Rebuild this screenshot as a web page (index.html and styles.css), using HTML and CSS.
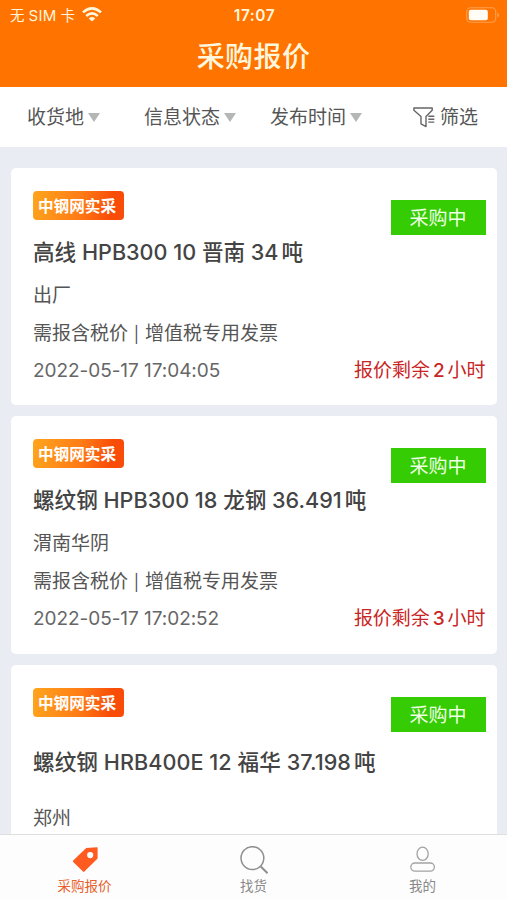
FILE: index.html
```html
<!DOCTYPE html>
<html lang="zh-CN">
<head>
<meta charset="utf-8">
<meta name="viewport" content="width=device-width">
<title>采购报价</title>
<link rel="stylesheet" href="styles.css">
</head>
<body>
<div class="app">
  <header class="header">
    <div class="status">
      <div class="carrier">
        <span class="carrier-text">无<span class="sim">SIM</span>卡</span>
        <svg class="wifi" viewBox="0 0 20 15"><g fill="none" stroke="#fff6dc" stroke-width="2.6"><path d="M1 5.4Q10-2.6 19 5.4"/><path d="M4.2 9Q10 3.8 15.8 9"/></g><path d="M10 14.6L6.7 11.4Q10 8.8 13.3 11.4Z" fill="#fff6dc"/></svg>
      </div>
      <span class="clock">17:07</span>
      <svg class="battery" viewBox="0 0 34 16"><rect x=".7" y=".7" width="29" height="14.6" rx="4" fill="none" stroke="#ffa04d" stroke-width="1.1"/><rect x="2.8" y="2.8" width="19" height="10.4" rx="2" fill="#fffdf5"/><path d="M31.3 5.4Q33.2 6.4 33.2 8T31.3 10.6Z" fill="#ffa04d"/></svg>
    </div>
    <h1 class="page-title">采购报价</h1>
  </header>
  <nav class="filters">
    <span class="filter f1">收货地<i class="caret"></i></span>
    <span class="filter f2">信息状态<i class="caret"></i></span>
    <span class="filter f3">发布时间<i class="caret"></i></span>
    <span class="filter f4"><svg class="funnel" viewBox="0 0 22 21" fill="none" stroke="#666" stroke-width="1.4" stroke-linejoin="round"><path d="M.9 1H19.2V3.2L13 9.5V19.6L8 16.8V9.5L.9 3.2Z"/><path d="M15.3 9.3H21.3M15.3 12.2H21.3M15.3 15.1H21.3"/></svg>筛选</span>
  </nav>
  <main class="list">
    <article class="card">
      <div class="top"><span class="brand">中钢网实采</span><span class="state">采购中</span></div>
      <h2 class="name">高线 HPB300 10 晋南 34<span class="unit">吨</span></h2>
      <p class="line place">出厂</p>
      <p class="line">需报含税价 <span class="bar">|</span> 增值税专用发票</p>
      <div class="foot"><time>2022-05-17 17:04:05</time><span class="left">报价剩余<b>2</b>小时</span></div>
    </article>
    <article class="card">
      <div class="top"><span class="brand">中钢网实采</span><span class="state">采购中</span></div>
      <h2 class="name">螺纹钢 HPB300 18 龙钢 36.491<span class="unit">吨</span></h2>
      <p class="line place">渭南华阴</p>
      <p class="line">需报含税价 <span class="bar">|</span> 增值税专用发票</p>
      <div class="foot"><time>2022-05-17 17:02:52</time><span class="left">报价剩余<b>3</b>小时</span></div>
    </article>
    <article class="card card-tall">
      <div class="top"><span class="brand">中钢网实采</span><span class="state">采购中</span></div>
      <h2 class="name">螺纹钢 HRB400E 12 福华 37.198<span class="unit">吨</span></h2>
      <p class="line place">郑州</p>
    </article>
  </main>
  <nav class="tabs">
    <a class="tab active"><svg class="icon" viewBox="0 0 28 28"><path fill="#ff5a1f" fill-rule="evenodd" d="M15.2 2L26 1.2Q26.6 1.2 26.6 2V12.5L13.4 25.6Q12.7 26.2 12 25.6L2.2 16Q1.5 15.2 2.2 14.4ZM19.2 6A3.1 3.1 0 1 0 19.2 12.2A3.1 3.1 0 1 0 19.2 6Z"/></svg>采购报价</a>
    <a class="tab"><svg class="icon" viewBox="0 0 28 28" fill="none" stroke="#8f8f8f" stroke-width="1.5"><circle cx="12.4" cy="12.1" r="11.4"/><path d="M20.5 20.3L27.5 27.2" stroke-width="2"/></svg>找货</a>
    <a class="tab"><svg class="icon" viewBox="0 0 28 28" fill="none" stroke="#a3a3a3" stroke-width="1.3"><ellipse cx="13.6" cy="7.8" rx="5.6" ry="6.6"/><rect x="1.8" y="17" width="23.6" height="8.2" rx="4.1"/></svg>我的</a>
  </nav>
</div>
</body>
</html>
```
FILE: styles.css
```css
* { box-sizing: border-box; margin: 0; padding: 0; }
body { font-family: Inter, "Noto Sans CJK SC", sans-serif; color: #555; background: #e9ecf3; }
.app { width: 507px; height: 900px; display: flex; flex-direction: column; overflow: hidden; }
.header { height: 87px; flex: none; background: #ff7300; color: #fff6dc; }
.status { height: 30px; padding: 0 8px 0 10px; display: grid; grid-template-columns: 1fr auto 1fr; align-items: center; }
.carrier { display: flex; align-items: center; gap: 7px; }
.carrier-text { font-size: 14.5px; line-height: 31px; height: 30px; white-space: nowrap; }
.sim { margin: 0 4px 0 4px; font-size: 15px; letter-spacing: .3px; }
.wifi { width: 20px; height: 15px; margin-bottom: 2px; }
.clock { font-size: 15.5px; font-weight: 600; letter-spacing: .5px; }
.battery { width: 34px; height: 16px; justify-self: end; margin: 0 -1px 1px 0; }
.page-title { height: 54px; line-height: 54px; text-align: center; font-size: 28px; font-weight: 500; letter-spacing: .4px; }
.filters { height: 60px; flex: none; background: #fff; display: flex; align-items: center; padding: 2px 29px 0 27px; font-size: 19px; }
.filter { display: flex; align-items: center; white-space: nowrap; line-height: 28px; }
.caret { margin: 0 0 2px 4px; border: 6px solid transparent; border-top: 9px solid #b5b7b7; border-bottom: 0; }
.f2 { margin-left: 44px; }
.f3 { margin-left: 34px; }
.f4 { margin-left: auto; }
.funnel { width: 22px; height: 21px; margin: 0 5px 2px 0; }
.list { flex: 1; min-height: 0; overflow: hidden; padding: 21px 10.5px 0 11px; display: flex; flex-direction: column; gap: 11px; }
.card { height: 237.4px; flex: none; background: #fff; border-radius: 5px; padding: 23px 11px 0 22px; }
.top { display: flex; justify-content: space-between; height: 45px; }
.brand { width: 91px; height: 29px; padding-right: 3px; border-radius: 4px; background: linear-gradient(100deg, #ffa51d, #ff7d16 50%, #f84c08 85%); color: #fff; font-size: 15.6px; font-weight: 700; line-height: 31px; text-align: center; white-space: nowrap; }
.state { width: 95px; height: 35px; margin-top: 9px; background: #35cc03; color: #efffe5; font-size: 19px; line-height: 37px; text-align: center; }
.name { height: 32px; line-height: 33px; font-size: 21.6px; font-weight: 500; color: #444; white-space: nowrap; }
.card-tall .name { margin-top: 13px; letter-spacing: .06px; }
.unit { margin-left: 3px; }
.line { font-size: 19px; line-height: 38px; height: 38px; white-space: nowrap; }
.bar { font-size: 16px; margin: 0 .5px; }
.place { margin-top: 9px; }
.card-tall .place { margin-top: 22px; }
.place + .line { margin-top: -.5px; }
.foot { height: 37px; line-height: 36px; font-size: 19px; letter-spacing: -.05px; display: flex; justify-content: space-between; }
time { color: #666; }
.left { color: #c92525; }
.left b { font-weight: 500; margin: 0 3px; }
.tabs { height: 66.5px; flex: none; border-top: 1.5px solid #dedede; background: #fdfdfd; display: grid; grid-template-columns: repeat(3, 1fr); }
.tab { display: flex; flex-direction: column; align-items: center; padding-top: 11px; font-size: 13.5px; line-height: 24px; color: #888; }
.icon { width: 28px; height: 28px; }
.active { color: #e8602c; }
```
